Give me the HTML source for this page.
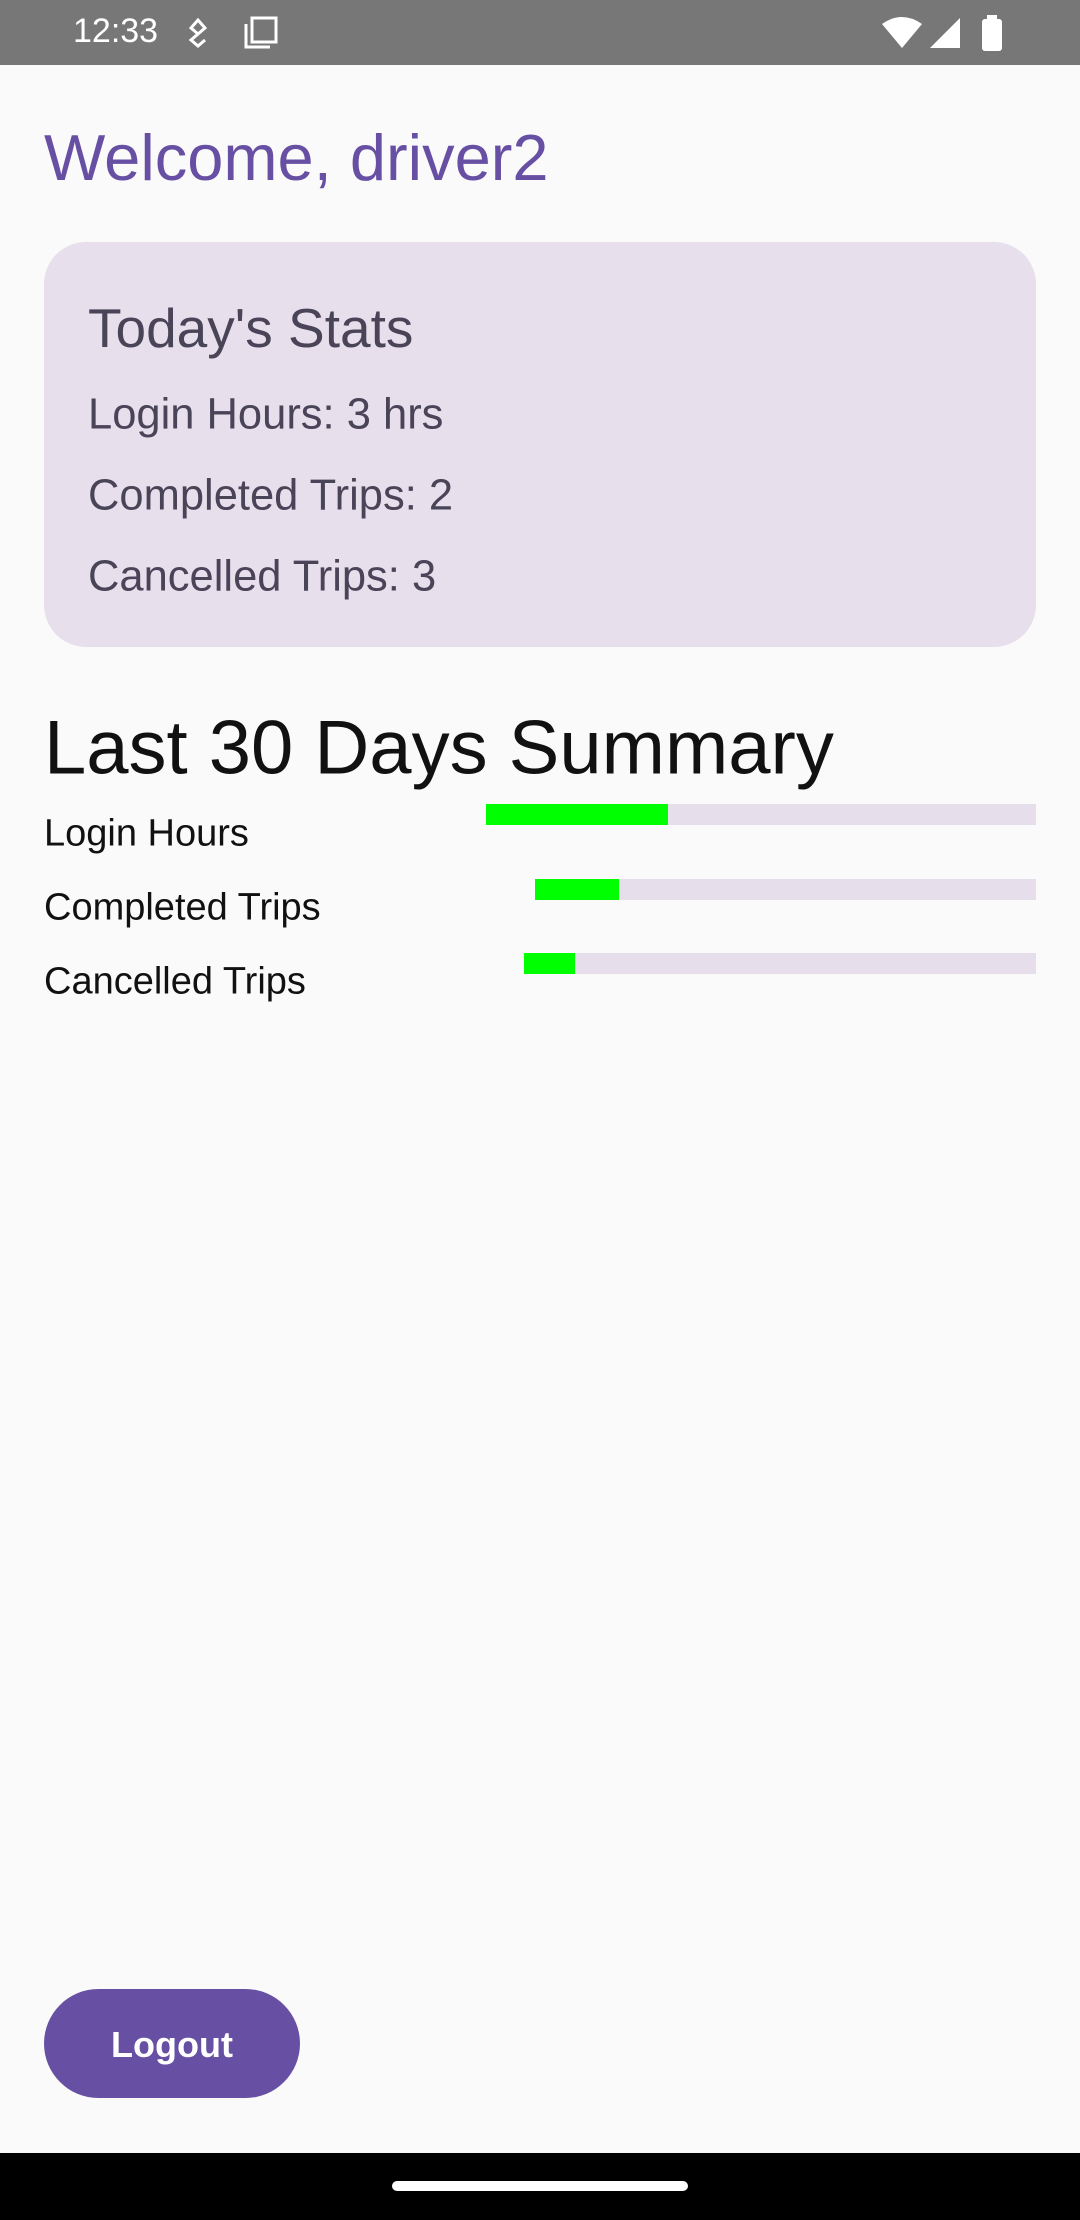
<!DOCTYPE html>
<html><head><meta charset="utf-8"><style>
*{margin:0;padding:0;box-sizing:border-box}
body{width:1080px;height:2220px;background:#fafafa;position:relative;overflow:hidden;font-family:"Liberation Sans",Roboto,sans-serif}
.a{position:absolute;white-space:nowrap}
.sb{left:0;top:0;width:1080px;height:65px;background:#777}
.lab{font-size:38px;color:#111;left:44px;transform:translateY(-50%)}
.st{font-size:43.5px;color:#4a4458;left:88px;transform:translateY(-50%)}
.tr{background:#e7deec;height:21px;right:44px}
.g{background:#00ff00;height:21px}
</style></head><body>
<div class="a sb"></div>
<div class="a" style="left:73px;top:12px;font-size:34px;color:#fff">12:33</div>
<svg class="a" style="left:186px;top:18px" width="24" height="30" viewBox="0 0 24 30"><path d="M12 2 L5 10 L12 16 L19 10 Z M12 16 L5 22 L12 28 L19 22" fill="none" stroke="#fff" stroke-width="3"/></svg>
<svg class="a" style="left:243px;top:16px" width="36" height="34" viewBox="0 0 36 34"><rect x="9" y="2" width="24" height="24" fill="none" stroke="#fff" stroke-width="3"/><path d="M3 8 V31 H27" fill="none" stroke="#fff" stroke-width="3"/></svg>
<svg class="a" style="left:880px;top:16px" width="44" height="34" viewBox="0 0 44 34"><path d="M2 8 Q22 -6 42 8 L22 32 Z" fill="#fff"/></svg>
<svg class="a" style="left:928px;top:16px" width="34" height="34" viewBox="0 0 34 34"><path d="M32 2 V32 H2 Z" fill="#fff"/></svg>
<svg class="a" style="left:980px;top:14px" width="24" height="38" viewBox="0 0 24 38"><rect x="2" y="5" width="20" height="32" rx="3" fill="#fff"/><rect x="7" y="1" width="10" height="5" fill="#fff"/></svg>

<div class="a" style="left:44px;top:120px;font-size:65px;color:#6750a4">Welcome, driver2</div>
<div class="a" style="left:44px;top:242px;width:992px;height:405px;background:#e8dfec;border-radius:42px"></div>
<div class="a st" style="top:328px;font-size:55px">Today's Stats</div>
<div class="a st" style="top:415px">Login Hours: 3 hrs</div>
<div class="a st" style="top:496px">Completed Trips: 2</div>
<div class="a st" style="top:577px">Cancelled Trips: 3</div>

<div class="a" style="left:44px;top:748px;transform:translateY(-50%);font-size:76px;color:#111">Last 30 Days Summary</div>
<div class="a lab" style="top:834px">Login Hours</div>
<div class="a lab" style="top:908px">Completed Trips</div>
<div class="a lab" style="top:982px">Cancelled Trips</div>
<div class="a tr" style="left:486px;top:804px"></div><div class="a g" style="left:486px;top:804px;width:182px"></div>
<div class="a tr" style="left:535px;top:879px"></div><div class="a g" style="left:535px;top:879px;width:84px"></div>
<div class="a tr" style="left:524px;top:953px"></div><div class="a g" style="left:524px;top:953px;width:51px"></div>

<div class="a" style="left:44px;top:1989px;width:256px;height:109px;border-radius:55px;background:#6750a4;color:#fff;font-weight:bold;font-size:36px;line-height:112px;text-align:center">Logout</div>
<div class="a" style="left:0;top:2153px;width:1080px;height:67px;background:#000"></div>
<div class="a" style="left:392px;top:2181px;width:296px;height:10px;border-radius:5px;background:#fff"></div>
</body></html>
